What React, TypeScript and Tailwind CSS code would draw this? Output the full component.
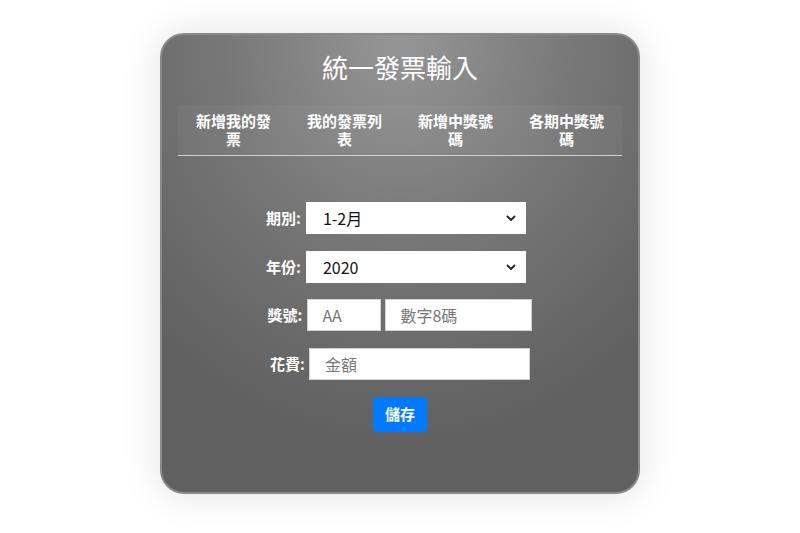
import React from "react";

const tabs = ["新增我的發票", "我的發票列表", "新增中獎號碼", "各期中獎號碼"];

function Chevron() {
  return (
    <svg width="12" height="12" viewBox="0 0 12 12" className="absolute right-[9px] top-1/2 -translate-y-1/2">
      <path d="M2.5 4.5 L6 8 L9.5 4.5" fill="none" stroke="#222" strokeWidth="1.8" strokeLinecap="round" strokeLinejoin="round" />
    </svg>
  );
}

function Select({ value }: { value: string }) {
  return (
    <div className="relative w-[220px] h-[32px] bg-white flex items-center pl-[17px] text-[16px] text-[#111]">
      {value}
      <Chevron />
    </div>
  );
}

function Field({ label, children }: { label: string; children: React.ReactNode }) {
  return (
    <div className="flex items-center justify-center gap-[5px] pr-[8px]">
      <span className="text-[15px] font-bold text-white">{label}</span>
      {children}
    </div>
  );
}

export default function App() {
  return (
    <div
      className="w-[800px] h-[533px] bg-white flex justify-center pt-[33px]"
      style={{ fontFamily: '"Noto Sans CJK TC", "Noto Sans", sans-serif' }}
    >
      <div className="w-[480px] h-[461px] rounded-[24px] border-2 border-[#8a8a8a] shadow-[0_0_40px_rgba(0,0,0,0.12)] bg-[radial-gradient(ellipse_75%_90%_at_50%_0%,#969696_0%,#777777_50%,#606060_100%)] px-4 pt-[12px]">
        <h1 className="text-center text-[26px] leading-[40px] text-white">統一發票輸入</h1>

        <div className="mt-[18px] grid grid-cols-4 bg-white/[0.04] border-b border-[#cfcfcf]">
          {tabs.map((t) => (
            <div key={t} className="px-[17px] py-[7px] text-center text-[15px] leading-[18px] font-bold text-white">
              {t}
            </div>
          ))}
        </div>

        <div className="mt-[46px] flex flex-col items-center gap-[17px]">
          <Field label="期別:">
            <Select value="1-2月" />
          </Field>
          <Field label="年份:">
            <Select value="2020" />
          </Field>
          <div className="flex items-center justify-center gap-[4px] -mt-[1px]">
            <span className="text-[15px] font-bold text-white mr-[1px]">獎號:</span>
            <div className="w-[74px] h-[32px] bg-white border border-[#d0d0d0] flex items-center pl-[14px] text-[16px] text-[#777]">
              AA
            </div>
            <div className="w-[147px] h-[32px] bg-white border border-[#d0d0d0] flex items-center pl-[14px] text-[16px] text-[#777]">
              數字8碼
            </div>
          </div>
          <div className="flex items-center justify-center gap-[4px]">
            <span className="text-[15px] font-bold text-white">花費:</span>
            <div className="w-[221px] h-[32px] bg-white border border-[#d0d0d0] flex items-center pl-[15px] text-[16px] text-[#777]">
              金額
            </div>
          </div>
          <button className="h-[35px] px-[12px] rounded-[4px] bg-[#007bff] text-white text-[15px] font-bold">
            儲存
          </button>
        </div>
      </div>
    </div>
  );
}
